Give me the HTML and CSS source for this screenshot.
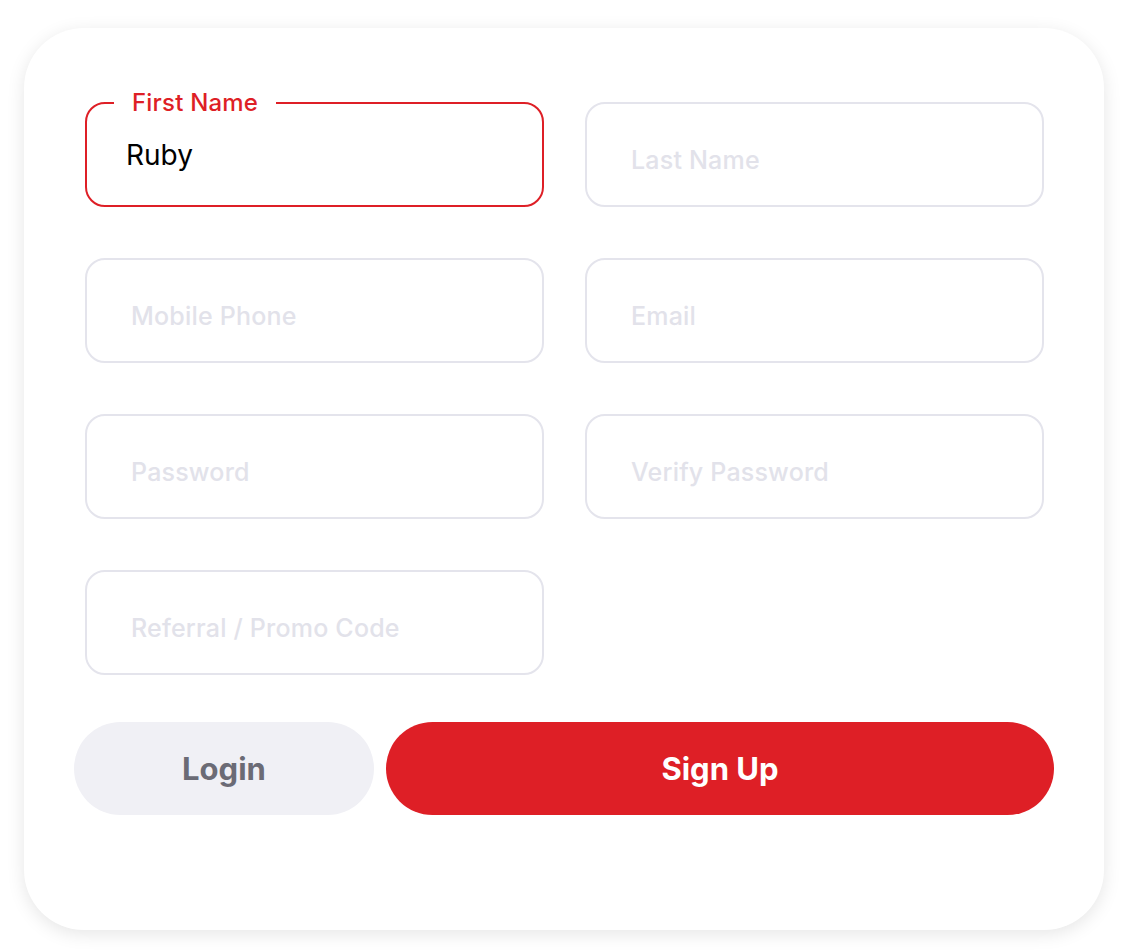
FILE: index.html
```html
<!DOCTYPE html>
<html lang="en">
<head>
<meta charset="utf-8">
<title>Sign Up</title>
<link rel="stylesheet" href="styles.css">
</head>
<body>
<div class="card">
  <form class="form">
    <div class="grid">
      <div class="field field-active">
        <span class="field-label">First Name</span>
        <input class="field-input field-input-filled" type="text" value="Ruby">
      </div>
      <div class="field">
        <input class="field-input" type="text" placeholder="Last Name">
      </div>
      <div class="field">
        <input class="field-input" type="tel" placeholder="Mobile Phone">
      </div>
      <div class="field">
        <input class="field-input" type="email" placeholder="Email">
      </div>
      <div class="field">
        <input class="field-input" type="password" placeholder="Password">
      </div>
      <div class="field">
        <input class="field-input" type="password" placeholder="Verify Password">
      </div>
      <div class="field">
        <input class="field-input" type="text" placeholder="Referral / Promo Code">
      </div>
    </div>
    <div class="actions">
      <button class="btn btn-login" type="button">Login</button>
      <button class="btn btn-signup" type="button">Sign Up</button>
    </div>
  </form>
</div>
</body>
</html>
```
FILE: styles.css
```css
* { box-sizing: border-box; }
html, body { margin: 0; padding: 0; background: #ffffff; }
body {
  font-family: Inter, "Noto Sans", "Liberation Sans", sans-serif;
  padding: 28px 26px 22px 24px;
}
.card {
  width: 1080px;
  height: 902px;
  background: #ffffff;
  border-radius: 60px;
  box-shadow: 0 4px 18px rgba(0, 0, 0, 0.10);
  padding: 74px 61px 0 61px;
}
.grid {
  display: grid;
  grid-template-columns: 459px 459px;
  column-gap: 41px;
  row-gap: 52px;
}
.field {
  position: relative;
  height: 105px;
  border: 2px solid #e4e4ec;
  border-radius: 20px;
  display: flex;
  align-items: center;
}
.grid { row-gap: 51px; }
.field-active { border-color: #de1f26; }
.field-label {
  position: absolute;
  top: -15px;
  left: 27px;
  padding: 0 18px;
  background: #ffffff;
  color: #de1f26;
  font-size: 24px;
  font-weight: 500;
  line-height: 28px;
  letter-spacing: 0.2px;
}
.field-input {
  width: 100%;
  height: 100%;
  border: 0;
  outline: none;
  background: transparent;
  font-family: inherit;
  font-size: 25px;
  font-weight: 500;
  padding: 10px 0 0 44px;
  color: #111;
  letter-spacing: 0.2px;
}
.field-input::placeholder { color: #e2e2ea; opacity: 1; }
.field-input-filled {
  font-size: 28px;
  font-weight: 400;
  color: #000;
  padding: 0 0 0 39px;
  letter-spacing: 0;
}
.actions {
  display: flex;
  gap: 12px;
  margin: 47px -11px 0 -11px;
}
.btn {
  height: 93px;
  border: 0;
  border-radius: 47px;
  font-family: inherit;
  font-size: 31px;
  font-weight: 700;
  letter-spacing: 0;
  cursor: pointer;
}
.btn-login {
  width: 300px;
  background: #f0f0f5;
  color: #6b6b75;
}
.btn-signup {
  flex: 1;
  background: #de1f26;
  color: #ffffff;
}
```
